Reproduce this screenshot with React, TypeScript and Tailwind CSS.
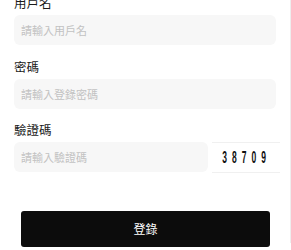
import React from "react";

const font = { fontFamily: '"Noto Sans CJK TC", "Noto Sans CJK SC", sans-serif' };

function Label({ children }: { children: React.ReactNode }) {
  return <div className="h-[20px] text-[12.5px] leading-[20px] text-[#1a1a1a] mb-[2px]">{children}</div>;
}

function Field({ placeholder, className = "" }: { placeholder: string; className?: string }) {
  return (
    <input
      placeholder={placeholder}
      className={`shrink-0 h-[30px] rounded-[6px] bg-[#f7f7f7] pl-[7px] text-[11px] outline-none placeholder:text-[#c2c2c2] ${className}`}
      style={font}
    />
  );
}

export default function App() {
  return (
    <div className="w-[291px] h-[250px] overflow-hidden bg-white" style={font}>
      <div className="w-[291px] h-[250px] border-r border-[#eeeeee]">
        <div className="mt-[-7px] pl-[14px] pr-[10px] flex flex-col">
          <Label>用戶名</Label>
          <Field placeholder="請輸入用戶名" className="w-[262px]" />
          <div className="h-[12px]" />
          <Label>密碼</Label>
          <Field placeholder="請輸入登錄密碼" className="w-[262px]" />
          <div className="h-[11px]" />
          <Label>驗證碼</Label>
          <div className="flex gap-[4px]">
            <Field placeholder="請輸入驗證碼" className="w-[194px]" />
            <div className="shrink-0 w-[68px] h-[31px] border-y border-[#f0f0f0] flex items-center justify-center overflow-hidden">
              <span
                className="text-[17px] font-semibold text-[#111] tracking-[10px] scale-x-[0.5] inline-block whitespace-nowrap mr-[-10px] ml-[-8px]"
                style={{ fontFamily: '"Liberation Sans", sans-serif' }}
              >
                38709
              </span>
            </div>
          </div>
          <div className="h-[38px]" />
          <button
            className="ml-[7px] w-[249px] h-[36px] rounded-[3px] bg-[#0c0c0c] text-white text-[12px]"
            style={font}
          >
            登錄
          </button>
        </div>
      </div>
    </div>
  );
}
